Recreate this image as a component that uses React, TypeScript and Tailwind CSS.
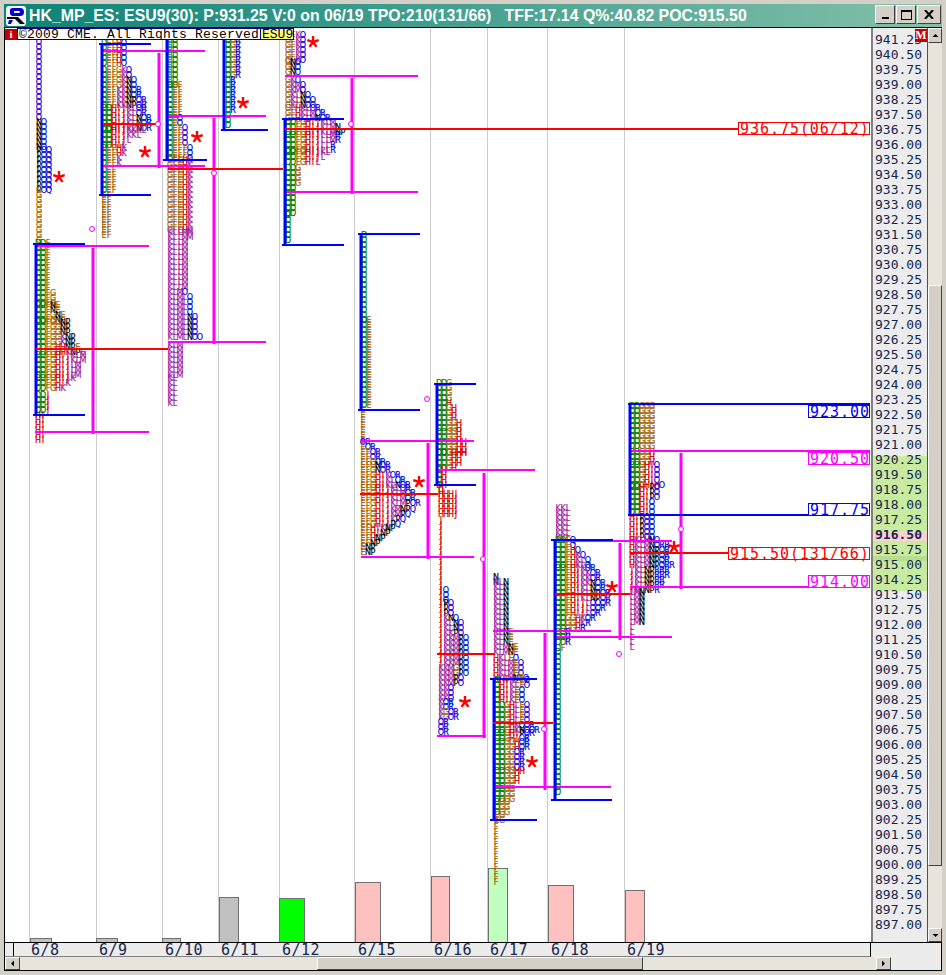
import React from "react";

type Band = [number, number, number, number, string, string?];

const COLORS: Record<string, string> = {
  B: "#009090", C: "#00a000", D: "#008000",
  E: "#a86000", F: "#a86000", G: "#a86000",
  H: "#e00000", I: "#e00000", J: "#e00000",
  K: "#a020a0", L: "#a020a0", M: "#a020a0",
  N: "#000000", P: "#000000",
  O: "#0000e0", Q: "#0000e0", R: "#0000e0",
};

const PROFILES: Band[][] = [
  [[42, 120, 39, 39, "O"], [122, 150, 39, 45, "NO"], [150, 190, 39, 49, "POQ"], [190, 240, 39, 39, "G"]],
  [
    [243, 280, 38, 48, "DDF"], [283, 303, 38, 53, "DDFG"], [305, 320, 38, 64, "DDFGGKL", "NE"],
    [322, 345, 38, 74, "DDFGGKKM", "NP"], [347, 352, 38, 84, "DDFGHHKLM", "NPE"],
    [355, 375, 38, 77, "DDFGHIJKL", "LM"], [378, 392, 38, 62, "DDFGHIJ", "K"],
    [395, 412, 38, 50, "DDHI", "J"], [415, 440, 38, 44, "HI"],
  ],
  [
    [43, 66, 104, 124, "DEFHN", "O"], [70, 88, 104, 135, "DEFGKNE", "O"], [90, 105, 104, 144, "DEFKKNPE", "OR"],
    [108, 128, 104, 150, "DDHIJKLNP", "OR"], [130, 145, 104, 125, "DDHIJK", "L"],
    [148, 166, 104, 120, "DEFHJ", "K"], [170, 190, 104, 113, "DEF"], [195, 235, 104, 108, "EF"],
  ],
  [
    [35, 85, 170, 175, "BD"], [85, 115, 170, 180, "DEF"], [118, 160, 170, 190, "DEFFG", "O"],
    [160, 230, 170, 188, "GFEHK"], [232, 290, 170, 185, "KLLM"], [292, 340, 170, 198, "KLMLNO", "O"],
    [345, 375, 170, 180, "KLM"], [378, 405, 170, 175, "KL"],
  ],
  [[35, 78, 228, 240, "DGR"], [80, 112, 228, 233, "DR"], [115, 125, 228, 228, "D"]],
  [
    [35, 60, 288, 304, "GFKN", "O"], [62, 76, 288, 298, "GF", "NO"], [80, 92, 288, 304, "GKM", "O"],
    [95, 105, 288, 314, "GKLNO", "O"], [108, 120, 288, 326, "GFHKLMN", "OR"],
    [122, 132, 288, 342, "DDFGHIJKLMNPO"], [135, 150, 288, 332, "DDFGHIJLLMP", "R"],
    [152, 165, 288, 317, "DDFGHIJK", "L"], [168, 185, 288, 300, "DDGHJ"], [188, 213, 288, 295, "DD"],
    [215, 240, 288, 288, "D"],
  ],
  [
    [235, 320, 364, 366, "D"], [320, 408, 364, 370, "DE"], [410, 440, 363, 363, "E"],
    [442, 462, 363, 384, "EFGH", "OR"], [465, 472, 363, 390, "EFGH", "NOR"],
    [475, 485, 363, 407, "EFGHIKLN", "OR"], [488, 506, 363, 417, "EFGHIJKLMPNO", "OR"],
    [509, 525, 363, 398, "EFGHIJKMN", "PQ"], [528, 545, 363, 380, "EFHIKLM", "NP"],
    [547, 555, 363, 375, "EFK", "NP"],
  ],
  [
    [383, 400, 439, 449, "DDG"], [403, 430, 439, 459, "DDGG", "H"], [432, 452, 439, 464, "DDGGH", "H"],
    [453, 470, 439, 455, "DDGH"], [470, 485, 439, 445, "DH"], [487, 492, 441, 441, "H"],
    [494, 518, 441, 455, "HHH", "J"], [520, 590, 441, 441, "J"],
    [590, 600, 441, 445, "J", "O"], [603, 615, 441, 452, "JK", "PO"], [618, 630, 441, 462, "JKLM", "NO"],
    [633, 665, 441, 468, "JKKMLN", "PO"], [668, 685, 441, 460, "KKMGN", "PO"], [688, 700, 441, 450, "KKG", "O"],
    [702, 720, 441, 456, "KGGN", "OR"], [722, 736, 441, 448, "GM", "OR"],
  ],
  [
    [577, 582, 496, 496, "N"], [582, 630, 496, 508, "KLN"], [632, 656, 496, 515, "KLMN", "NE"],
    [658, 678, 496, 525, "HKLMNP", "EO"], [680, 703, 497, 524, "DHIKLN", "EO"],
    [705, 722, 497, 527, "DDGHLN", "EO"], [725, 730, 497, 535, "DDGHKN", "OOR"],
    [733, 740, 497, 526, "DDGHIP", "OR"], [742, 768, 497, 522, "DDGGHI", "OR"],
    [771, 787, 497, 513, "DDGGH"], [789, 800, 497, 512, "DDGG"], [802, 812, 497, 505, "DG"],
    [815, 820, 497, 503, "E", "G"], [822, 882, 496, 496, "F"],
  ],
  [
    [508, 538, 558, 568, "KKL"], [540, 565, 558, 590, "DDFHKLN", "Q"], [568, 585, 558, 603, "DDFHJKKN", "OR"],
    [588, 600, 558, 610, "DDFHIKLNP", "OR"], [603, 615, 558, 598, "DDFHIJLO", "OR"],
    [618, 630, 558, 585, "DDGGHKO", "R"], [632, 645, 558, 570, "DDFH", "R"], [648, 650, 558, 562, "DF"],
    [652, 795, 558, 558, "D"],
  ],
  [
    [406, 450, 632, 650, "DDGG"], [452, 462, 632, 654, "DDGGH", "H"], [465, 485, 632, 660, "DDGHIH", "O"],
    [487, 515, 632, 650, "DDHIP", "O"], [517, 538, 632, 650, "HIPO"], [540, 548, 632, 666, "HKLMNOR"],
    [550, 568, 632, 670, "HKLMNPQR"], [570, 590, 632, 658, "JKLNPR"], [592, 625, 632, 640, "LMN"],
    [627, 650, 632, 634, "L"],
  ],
];

const GRID = [30, 97, 163, 219, 280, 355, 431, 488, 548, 625];
const VOL: [number, number, number, string][] = [
  [30, 52, 938, "#c0c0c0"], [96, 118, 938, "#c0c0c0"], [162, 181, 938, "#c0c0c0"], [219, 239, 897, "#c0c0c0"],
  [279, 305, 898, "#00ff00"], [355, 381, 882, "#ffc0c0"], [431, 450, 876, "#ffc0c0"], [488, 508, 868, "#c0ffc0"],
  [548, 574, 885, "#ffc0c0"], [625, 645, 890, "#ffc0c0"],
];
const BLUE_H: [number, number, number][] = [
  [33, 85, 244], [33, 85, 415], [99, 151, 44], [99, 151, 195], [163, 207, 160], [221, 268, 130], [282, 344, 119], [282, 344, 245],
  [358, 420, 234], [358, 420, 410], [434, 476, 384], [434, 476, 485], [490, 537, 679], [490, 537, 820], [551, 613, 540], [551, 612, 800],
  [628, 870, 404], [628, 870, 515],
];
const STEMS: [number, number, number][] = [
  [36, 244, 415], [102, 44, 195], [167, 28, 160], [224, 28, 130], [285, 120, 245], [361, 234, 410], [437, 384, 485], [494, 680, 820], [555, 540, 800], [630, 404, 515],
];
const MAG_H: [number, number, number][] = [
  [35, 149, 246], [35, 149, 432], [101, 205, 51], [103, 205, 166], [167, 266, 116], [168, 266, 342], [285, 418, 76], [285, 418, 192],
  [361, 474, 441], [361, 474, 557], [437, 535, 470], [437, 486, 736], [493, 611, 631], [493, 611, 787], [555, 672, 541], [555, 672, 637],
  [630, 870, 451], [630, 870, 587],
];
const MAG_V: [number, number, number][] = [
  [93, 248, 434], [159, 53, 168], [214, 118, 344], [352, 78, 194], [428, 443, 559], [484, 473, 738], [545, 633, 790], [620, 543, 640], [681, 453, 589],
];
const RED_H: [number, number, number][] = [
  [36, 168, 349], [103, 160, 124], [168, 283, 169], [285, 738, 129], [360, 438, 494], [437, 495, 654], [493, 553, 723], [555, 630, 594], [630, 728, 553],
];
const DOTS: [number, number][] = [[92, 229], [158, 124], [214, 173], [351, 124], [483, 559], [427, 399], [544, 729], [619, 654], [681, 529]];
const STARS: [number, number][] = [[59, 177], [145, 152], [197, 137], [243, 103], [313, 42], [419, 482], [465, 702], [532, 762], [612, 587], [674, 547]];
const LABELS: [number, number, number, string, string][] = [
  [738, 869, 122, "936.75(06/12)", "#ff0000"],
  [808, 869, 405, "923.00", "#0000ff"],
  [808, 869, 452, "920.50", "#ff00ff"],
  [808, 869, 503, "917.75", "#0000ff"],
  [728, 869, 547, "915.50(131/66)", "#ff0000"],
  [808, 869, 575, "914.00", "#ff00ff"],
];

const DATES = [
  { t: "6/8", c: "w-[68px]" }, { t: "6/9", c: "w-[66px]" }, { t: "6/10", c: "w-[56px]" }, { t: "6/11", c: "w-[61px]" },
  { t: "6/12", c: "w-[76px]" }, { t: "6/15", c: "w-[76px]" }, { t: "6/16", c: "w-[56px]" }, { t: "6/17", c: "w-[61px]" },
  { t: "6/18", c: "w-[76px]" }, { t: "6/19", c: "w-[60px]" },
];

function axisPrices(): string[] {
  const out: string[] = [];
  for (let i = 0; i < 60; i++) out.push((941.25 - i * 0.75).toFixed(2));
  return out;
}
function axisBg(p: number): string {
  if (p === 916.5) return "bg-[linear-gradient(#ffd0d0_0,#ffd0d0_10px,#c8eba0_10px)]";
  if (p === 915.75) return "bg-[linear-gradient(#c8eba0_0,#c8eba0_10px,#b8dc92_10px)]";
  if (p <= 920.25 && p >= 914.25) return "bg-[#c8eba0]";
  return "";
}

function Tpo() {
  const items: React.ReactElement[] = [];
  PROFILES.forEach((bands, pi) => {
    bands.forEach((b, bi) => {
      const [y1, y2, x0, xr, seq, edge = ""] = b;
      const prev = bands[bi - 1];
      const slope = prev && Math.abs(prev[2] - x0) <= 1 && Math.abs(prev[3] - xr) <= 30 && Math.abs(prev[1] - y1) <= 5 && xr - x0 >= 15;
      const rows = Math.floor((y2 - y1) / 5) + 1;
      for (let r = 0; r < rows; r++) {
        const y = y1 + r * 5;
        const right = slope ? prev[3] + ((xr - prev[3]) * (r + 1)) / rows : xr;
        const cols = Math.round((right - x0) / 5) + 1;
        for (let c = 0; c < cols; c++) {
          let ch = seq[Math.min(c, seq.length - 1)];
          const fromEnd = cols - 1 - c;
          if (fromEnd < edge.length) ch = edge[edge.length - 1 - fromEnd];
          items.push(
            <text key={`${pi}-${bi}-${r}-${c}`} x={x0 + c * 5} y={y + 3} fill={COLORS[ch]} stroke={COLORS[ch]} strokeWidth={0.2}>
              {ch}
            </text>
          );
        }
      }
    });
  });
  return <g className="font-['DejaVu_Sans',sans-serif] text-[8px]" textAnchor="middle">{items}</g>;
}

function Star({ x, y }: { x: number; y: number }) {
  const arms = [0, 72, 144, 216, 288];
  return (
    <g stroke="#ff0000" strokeWidth={2.4}>
      {arms.map((a) => (
        <line key={a} x1={x} y1={y} x2={x + 6 * Math.sin((a * Math.PI) / 180)} y2={y - 6 * Math.cos((a * Math.PI) / 180)} />
      ))}
    </g>
  );
}

function Chart() {
  return (
    <svg width={866} height={914} viewBox="5 28 866 914" className="block">
      <rect x={5} y={28} width={866} height={914} fill="#ffffff" />
      {GRID.map((x) => <rect key={x} x={x - 1} y={28} width={1} height={914} fill="#cccccc" />)}
      {VOL.map(([a, b, t, f]) => (
        <rect key={a} x={a + 0.5} y={t + 0.5} width={b - a - 1} height={942 - t} fill={f} stroke="#707070" />
      ))}
      <Tpo />
      {MAG_H.map(([a, b, y]) => <rect key={`${a}-${y}`} x={a} y={y - 1} width={b - a} height={2} fill="#ff00ff" />)}
      {MAG_V.map(([x, a, b]) => <rect key={x} x={x - 1.5} y={a} width={3} height={b - a} fill="#ff00ff" />)}
      {BLUE_H.map(([a, b, y]) => <rect key={`${a}-${y}`} x={a} y={y - 1} width={b - a} height={2} fill="#0000ff" />)}
      {STEMS.map(([x, a, b]) => <rect key={x} x={x - 1.5} y={a} width={3} height={b - a} fill="#0000ff" />)}
      {RED_H.map(([a, b, y]) => <rect key={`${a}-${y}`} x={a} y={y - 1} width={b - a} height={2} fill="#ff0000" />)}
      {DOTS.map(([x, y]) => <ellipse key={x} cx={x} cy={y} rx={2.5} ry={2.5} fill="#ffffff" stroke="#ff00ff" />)}
      {STARS.map(([x, y]) => <Star key={x} x={x} y={y} />)}
      {LABELS.map(([a, b, y, t, c]) => (
        <g key={t}>
          <rect x={a + 0.5} y={y + 0.5} width={b - a} height={12} fill="#ffffff" stroke={c} />
          <text x={a + 2} y={y + 11.5} fill={c} className="font-['DejaVu_Sans_Mono',monospace] text-[15px] tracking-[0.95px]">{t}</text>
        </g>
      ))}
    </svg>
  );
}

function Logo() {
  return (
    <svg width={20} height={20} viewBox="0 0 20 20" className="shrink-0">
      <rect x={0} y={0} width={20} height={20} rx={3} fill="#f4f6fa" />
      <path d="M4 8 V4 Q4 2 7 2 H14 Q18 2 18 6 Q18 10 14 10 H6 L4 8 Z M8 5 V7 H13 Q14 7 14 6 Q14 5 13 5 Z" fill="#0000cc" fillRule="evenodd" />
      <path d="M1 11 H12 L19 18 H14 L9 13 H1 Z" fill="#000000" />
      <path d="M3 14 H7 L5 18 H2 Z" fill="#0000cc" />
    </svg>
  );
}

const BEVEL = "bg-[#d4d0c8] border border-t-white border-l-white border-r-[#404040] border-b-[#404040]";

function Arrow({ d }: { d: string }) {
  return (
    <svg width={7} height={7} viewBox="0 0 7 7"><path d={d} fill="#000" /></svg>
  );
}

export default function App() {
  const prices = axisPrices();
  return (
    <div className="w-[946px] h-[975px] bg-[#d4d0c8] flex flex-col overflow-hidden pt-1 pl-1 pr-1 font-['Liberation_Sans',sans-serif]">
      {/* title bar */}
      <div className="h-[23px] shrink-0 flex items-center pl-0.5 bg-[linear-gradient(90deg,#0b8377,#84c0ab)]">
        <Logo />
        <span className="ml-[3px] text-white font-bold text-[15.85px] whitespace-pre leading-none">
          {"HK_MP_ES: ESU9(30): P:931.25 V:0 on 06/19 TPO:210(131/66)   TFF:17.14 Q%:40.82 POC:915.50"}
        </span>
        <div className="ml-auto flex gap-px pr-[1px] self-start pt-[1px]">
          <button className={`${BEVEL} w-5 h-[19px] flex items-end justify-center pb-1`}><span className="block w-[7px] h-[2px] bg-black" /></button>
          <button className={`${BEVEL} w-5 h-[19px] flex items-center justify-center`}><span className="block w-[11px] h-[10px] border border-t-2 border-black" /></button>
          <button className={`${BEVEL} w-6 h-[19px] flex items-center justify-center text-black`}>
            <svg width={10} height={9} viewBox="0 0 10 9"><path d="M1 0 L9 9 M9 0 L1 9" stroke="#000" strokeWidth={2} /></svg>
          </button>
        </div>
      </div>

      {/* client area */}
      <div className="flex-1 flex flex-col border-t border-l border-r border-black w-[938px]">
        <div className="flex h-[914px] shrink-0">
          <div className="relative w-[866px] h-[914px] shrink-0 overflow-hidden">
            <Chart />
            <div className="absolute left-0 top-[1px] flex items-start font-['Liberation_Mono',monospace]">
              <span className="w-3 h-[11px] bg-[#c00000] text-white text-[11px] leading-[11px] text-center font-bold font-['Liberation_Serif',serif]">i</span>
              <span className="h-[12px] w-[244px] -mt-[1px] bg-white border border-[#000080] text-black text-[13px] leading-[11px] pl-[1px] tracking-[0.2px] whitespace-pre overflow-hidden">©2009 CME. All Rights Reserved</span>
              <span className="h-[12px] w-[34px] -mt-[1px] -ml-px bg-[#ffff80] border border-[#000080] text-black text-[13px] leading-[11px] pl-[1px] overflow-hidden">ESU9</span>
            </div>
          </div>
          {/* price axis */}
          <div className="relative w-[57px] h-[914px] shrink-0 overflow-hidden bg-[#ececec] border-l-2 border-r border-l-[#808080] border-r-[#505050] pt-2 font-['DejaVu_Sans_Mono',monospace] text-[13px] text-[#16264c]">
            {prices.map((p) => (
              <div key={p} className={`h-[15px] pl-[2px] leading-[8px] ${axisBg(parseFloat(p))} ${p === "916.50" ? "font-bold" : ""}`}>{p}</div>
            ))}
            <span className="absolute right-0 top-[1px] w-3 h-[13px] bg-[#c80000] text-white text-[12px] leading-[13px] text-center font-bold font-['Liberation_Serif',serif]">M</span>
          </div>
          {/* vertical scrollbar */}
          <div className="w-[14px] shrink-0 flex flex-col bg-[#e8e4dc]">
            <button className={`${BEVEL} h-[15px] flex items-center justify-center`}><Arrow d="M3.5 2 L6.5 5 H0.5 Z" /></button>
            <div className="h-[242px]" />
            <div className={`${BEVEL} bg-[#d4ccb8] h-[581px]`} />
            <div className="flex-1" />
            <button className={`${BEVEL} h-[14px] flex items-center justify-center`}><Arrow d="M0.5 2 H6.5 L3.5 5 Z" /></button>
          </div>
        </div>
        {/* date strip */}
        <div className="flex h-[15px] shrink-0 border-t border-black bg-[#ececec]">
          <div className="relative w-[866px] shrink-0 flex border-r border-b border-b-[#808080] border-r-black font-['DejaVu_Sans_Mono',monospace] text-[15px] text-[#16264c] leading-[14px] tracking-[0.5px] pl-[26px]">
            <span className="absolute left-2 top-0 w-px h-[13px] bg-black" />
            {DATES.map((d) => <span key={d.t} className={`${d.c} shrink-0`}>{d.t}</span>)}
          </div>
        </div>
        {/* horizontal scrollbar */}
        <div className="flex h-[13px] shrink-0 bg-[#ececec]">
          <div className="w-[886px] shrink-0 flex bg-[#e8e4dc]">
            <button className={`${BEVEL} w-[15px] flex items-center justify-center`}><Arrow d="M2 3.5 L5 0.5 V6.5 Z" /></button>
            <div className="w-[297px]" />
            <div className={`${BEVEL} bg-[#d4ccb8] w-[326px]`} />
            <div className="flex-1" />
            <button className={`${BEVEL} w-[15px] flex items-center justify-center`}><Arrow d="M2 0.5 L5 3.5 L2 6.5 Z" /></button>
          </div>
        </div>
        <div className="h-px bg-black shrink-0" />
      </div>
      <div className="h-1 shrink-0" />
    </div>
  );
}
